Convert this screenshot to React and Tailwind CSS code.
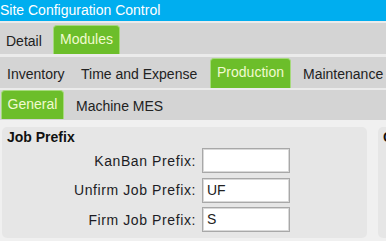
import React from 'react';

const font = { fontFamily: '"Liberation Sans", Arial, sans-serif' };

const Tab = ({ label, active, className = '' }) =>
    active ? (
        <div className={`flex h-full items-start justify-center rounded-t-[4px] border border-b-0 border-[#a6da7c] bg-[#6cbe2a] pt-[5px] text-[14px] leading-[16px] text-[#f1fad0] ${className}`}>
            {label}
        </div>
    ) : (
        <div className={`flex h-full items-start whitespace-nowrap pt-[8px] text-[14px] leading-[16px] text-[#222] ${className}`}>
            {label}
        </div>
    );

const Field = ({ label, value }) => (
    <>
        <div className="flex items-center justify-end text-[14px] leading-[16px] tracking-[0.6px] text-[#1c1c24]">{label}</div>
        <div className="flex h-[25px] items-center border border-[#a8a8a8] bg-white pl-[4px] text-[14px] text-[#222] shadow-[inset_0_0_0_1px_#d9d9d9]">
            {value}
        </div>
    </>
);

export default function App() {
    return (
        <div className="h-[241px] w-[386px] overflow-hidden bg-[#f0f0f0]" style={font}>
            {/* Title */}
            <div className="h-[21px] bg-[#00aeef] text-[14px] leading-[21px] text-white">Site Configuration Control</div>
            <div className="h-[2px] bg-[#ebebeb]" />

            {/* Tab row 1 */}
            <div className="flex h-[31px] items-end bg-[#d4d4d4]">
                <div className="h-[29px] flex">
                    <Tab label="Detail" className="w-[53px] pl-[6px]" />
                    <Tab label="Modules" active className="w-[67px]" />
                </div>
            </div>
            <div className="h-[3px] bg-[#ebebeb]" />

            {/* Tab row 2 */}
            <div className="flex h-[31px] items-end bg-[#d4d4d4]">
                <div className="flex h-[30px]">
                    <Tab label="Inventory" className="w-[74px] pl-[7px]" />
                    <Tab label="Time and Expense" className="w-[136px] pl-[7px]" />
                    <Tab label="Production" active className="w-[81px]" />
                    <Tab label="Maintenance" className="pl-[12px]" />
                </div>
            </div>
            <div className="h-[2px] bg-[#ebebeb]" />

            {/* Tab row 3 */}
            <div className="flex h-[30px] items-start bg-[#d4d4d4] pl-[1px]">
                <div className="flex h-[29px]">
                    <Tab label="General" active className="w-[63px]" />
                    <Tab label="Machine MES" className="pl-[12px]" />
                </div>
            </div>

            {/* Content */}
            <div className="flex gap-[11px] pl-[2px] pt-[7px]">
                <div className="h-[111px] w-[365px] shrink-0 rounded-[5px] bg-[#e6e6e6]">
                    <div className="pl-[5px] pt-[2px] text-[14px] font-bold leading-[16px] text-[#111]">Job Prefix</div>
                    <div className="mt-[3px] grid grid-cols-[194px_88px] gap-x-[6px] gap-y-[4.5px]">
                        <Field label="KanBan Prefix:" value="" />
                        <Field label="Unfirm Job Prefix:" value="UF" />
                        <Field label="Firm Job Prefix:" value="S" />
                    </div>
                </div>
                <div className="h-[111px] w-[60px] shrink-0 rounded-[5px] bg-[#e6e6e6]">
                    <div className="pl-[5px] pt-[2px] text-[14px] font-bold leading-[16px] text-[#111]">Costing</div>
                </div>
            </div>
        </div>
    );
}
